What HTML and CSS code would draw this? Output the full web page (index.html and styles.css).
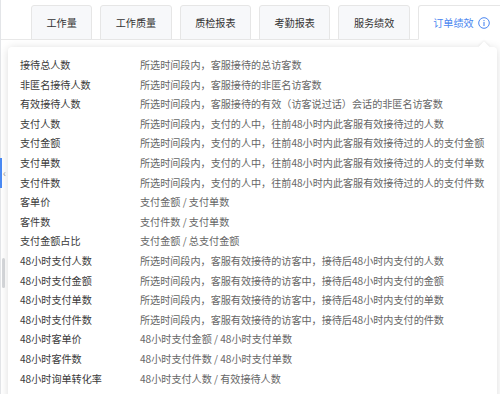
FILE: index.html
```html
<!DOCTYPE html>
<html lang="zh">
<head>
	<meta charset="UTF-8">
	<title>订单绩效</title>
	<link rel="stylesheet" href="styles.css">
</head>
<body>
	<div class="page">
		<div class="side">
			<span class="side-toggle">&lsaquo;</span>
			<span class="side-thumb"></span>
		</div>
		<div class="main">
			<ul class="tabs">
				<li class="tab">工作量</li>
				<li class="tab">工作质量</li>
				<li class="tab">质检报表</li>
				<li class="tab">考勤报表</li>
				<li class="tab">服务绩效</li>
				<li class="tab active">订单绩效
					<svg class="info" width="12" height="12" viewBox="0 0 12 12">
						<circle cx="6" cy="6" r="5.3" fill="none" stroke="currentColor" stroke-width="1"/>
						<circle cx="6" cy="3.6" r="0.7" fill="currentColor"/>
						<rect x="5.45" y="5" width="1.1" height="4" fill="currentColor"/>
					</svg>
				</li>
			</ul>
		</div>

		<div class="popover">
			<span class="arrow"></span>
			<dl class="defs">
				<div class="row"><dt>接待总人数</dt><dd>所选时间段内，客服接待的总访客数</dd></div>
				<div class="row"><dt>非匿名接待人数</dt><dd>所选时间段内，客服接待的非匿名访客数</dd></div>
				<div class="row"><dt>有效接待人数</dt><dd>所选时间段内，客服接待的有效（访客说过话）会话的非匿名访客数</dd></div>
				<div class="row"><dt>支付人数</dt><dd>所选时间段内，支付的人中，往前48小时内此客服有效接待过的人数</dd></div>
				<div class="row"><dt>支付金额</dt><dd>所选时间段内，支付的人中，往前48小时内此客服有效接待过的人的支付金额</dd></div>
				<div class="row"><dt>支付单数</dt><dd>所选时间段内，支付的人中，往前48小时内此客服有效接待过的人的支付单数</dd></div>
				<div class="row"><dt>支付件数</dt><dd>所选时间段内，支付的人中，往前48小时内此客服有效接待过的人的支付件数</dd></div>
				<div class="row"><dt>客单价</dt><dd>支付金额 / 支付单数</dd></div>
				<div class="row"><dt>客件数</dt><dd>支付件数 / 支付单数</dd></div>
				<div class="row"><dt>支付金额占比</dt><dd>支付金额 / 总支付金额</dd></div>
				<div class="row"><dt>48小时支付人数</dt><dd>所选时间段内，客服有效接待的访客中，接待后48小时内支付的人数</dd></div>
				<div class="row"><dt>48小时支付金额</dt><dd>所选时间段内，客服有效接待的访客中，接待后48小时内支付的金额</dd></div>
				<div class="row"><dt>48小时支付单数</dt><dd>所选时间段内，客服有效接待的访客中，接待后48小时内支付的单数</dd></div>
				<div class="row"><dt>48小时支付件数</dt><dd>所选时间段内，客服有效接待的访客中，接待后48小时内支付的件数</dd></div>
				<div class="row"><dt>48小时客单价</dt><dd>48小时支付金额 / 48小时支付单数</dd></div>
				<div class="row"><dt>48小时客件数</dt><dd>48小时支付件数 / 48小时支付单数</dd></div>
				<div class="row"><dt>48小时询单转化率</dt><dd>48小时支付人数 / 有效接待人数</dd></div>
			</dl>
		</div>
	</div>
</body>
</html>
```

FILE: styles.css
```css
* {
	margin: 0;
	padding: 0;
	box-sizing: border-box;
}
li {
	list-style: none;
}
body {
	font-family: "Noto Sans CJK SC", "Noto Sans", sans-serif;
	font-size: 10.1px;
	color: #333;
	background: #fff;
}
.page {
	position: relative;
	display: flex;
	width: 500px;
	height: 394px;
	overflow: hidden;
}
.side {
	position: relative;
	width: 7px;
	background: #eceef1;
	border-right: 1px solid #e3e5e8;
}
.side-toggle {
	position: absolute;
	left: 0;
	top: 158px;
	width: 7px;
	height: 30px;
	border-left: 2px solid #4a8af4;
	background: #fff;
	color: #999;
	font-size: 10px;
	line-height: 30px;
	text-align: center;
}
.side-thumb {
	position: absolute;
	left: 2px;
	top: 258px;
	width: 3px;
	height: 30px;
	border-radius: 2px;
	background: #d6d8db;
}
.main {
	flex: 1;
}
.tabs {
	display: flex;
	gap: 8px;
	padding: 5px 0 0 30px;
	border-bottom: 1px solid #e8e8e8;
}
.tab {
	display: flex;
	align-items: center;
	gap: 4px;
	height: 35px;
	margin-bottom: -1px;
	padding: 0 14.5px;
	border: 1px solid #e6e6e6;
	border-radius: 3px 3px 0 0;
	background: #f7f8fa;
	color: #333;
	white-space: nowrap;
}
.tab.active {
	background: #fff;
	border-bottom-color: #fff;
	color: #4a86f0;
}
.info {
	display: block;
}
.popover {
	position: absolute;
	left: 8px;
	top: 47px;
	width: 489px;
	height: 360px;
	padding: 8px 12px;
	background: #fff;
	border-radius: 4px;
	box-shadow: 0 1px 8px rgba(0, 0, 0, 0.14);
}
.arrow {
	position: absolute;
	right: 9px;
	top: -4px;
	width: 8px;
	height: 8px;
	background: #fff;
	transform: rotate(45deg);
	box-shadow: -1px -1px 2px rgba(0, 0, 0, 0.06);
}
.row {
	display: flex;
	height: 19.6px;
	line-height: 19.6px;
	white-space: nowrap;
}
.row dt {
	flex: none;
	width: 120px;
	color: #3a3a3a;
}
.row dd {
	flex: none;
	color: #666;
}
```
